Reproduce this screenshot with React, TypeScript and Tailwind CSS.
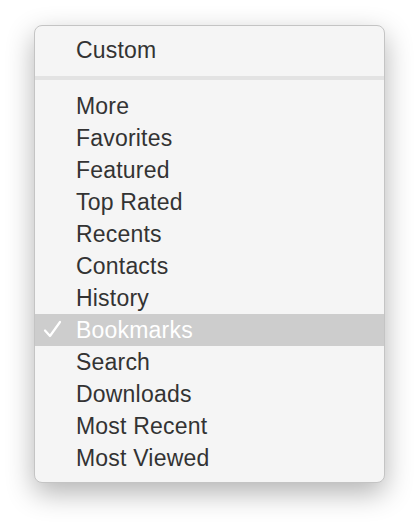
const items = [
  'More',
  'Favorites',
  'Featured',
  'Top Rated',
  'Recents',
  'Contacts',
  'History',
  'Bookmarks',
  'Search',
  'Downloads',
  'Most Recent',
  'Most Viewed',
];

function Check() {
  return (
    <svg width="20" height="20" viewBox="0 0 20 20" className="absolute left-[8px] top-[6px]">
      <path d="M2 10.5 L7 16 L17 2" fill="none" stroke="white" strokeWidth="2.2" strokeLinecap="round" strokeLinejoin="round" />
    </svg>
  );
}

export default function App() {
  const selected = 'Bookmarks';

  return (
    <div className="w-[418px] h-[524px] bg-white pt-[25px] pl-[34px]" style={{ fontFamily: '"Liberation Sans", Arial, sans-serif' }}>
      <div className="w-[351px] h-[458px] bg-[#f5f5f5] rounded-[8px] border border-[#c4c4c4] shadow-[0_10px_28px_rgba(0,0,0,0.3)] pt-[8px] overflow-hidden">
        <div className="h-[32px] flex items-center pl-[41px] text-[23px] text-[#333333] tracking-[0.2px]">Custom</div>
        <div className="h-[4px] bg-[#e3e3e3] mt-[10px] mb-[10px]" />
        {items.map((item) => {
          const active = item === selected;
          return (
            <div
              key={item}
              className={
                active
                  ? 'relative h-[32px] flex items-center pl-[41px] text-[23px] tracking-[0.2px] bg-[#cdcdcd] text-white'
                  : 'relative h-[32px] flex items-center pl-[41px] text-[23px] tracking-[0.2px] text-[#333333]'
              }
            >
              {active && <Check />}
              {item}
            </div>
          );
        })}
      </div>
    </div>
  );
}
